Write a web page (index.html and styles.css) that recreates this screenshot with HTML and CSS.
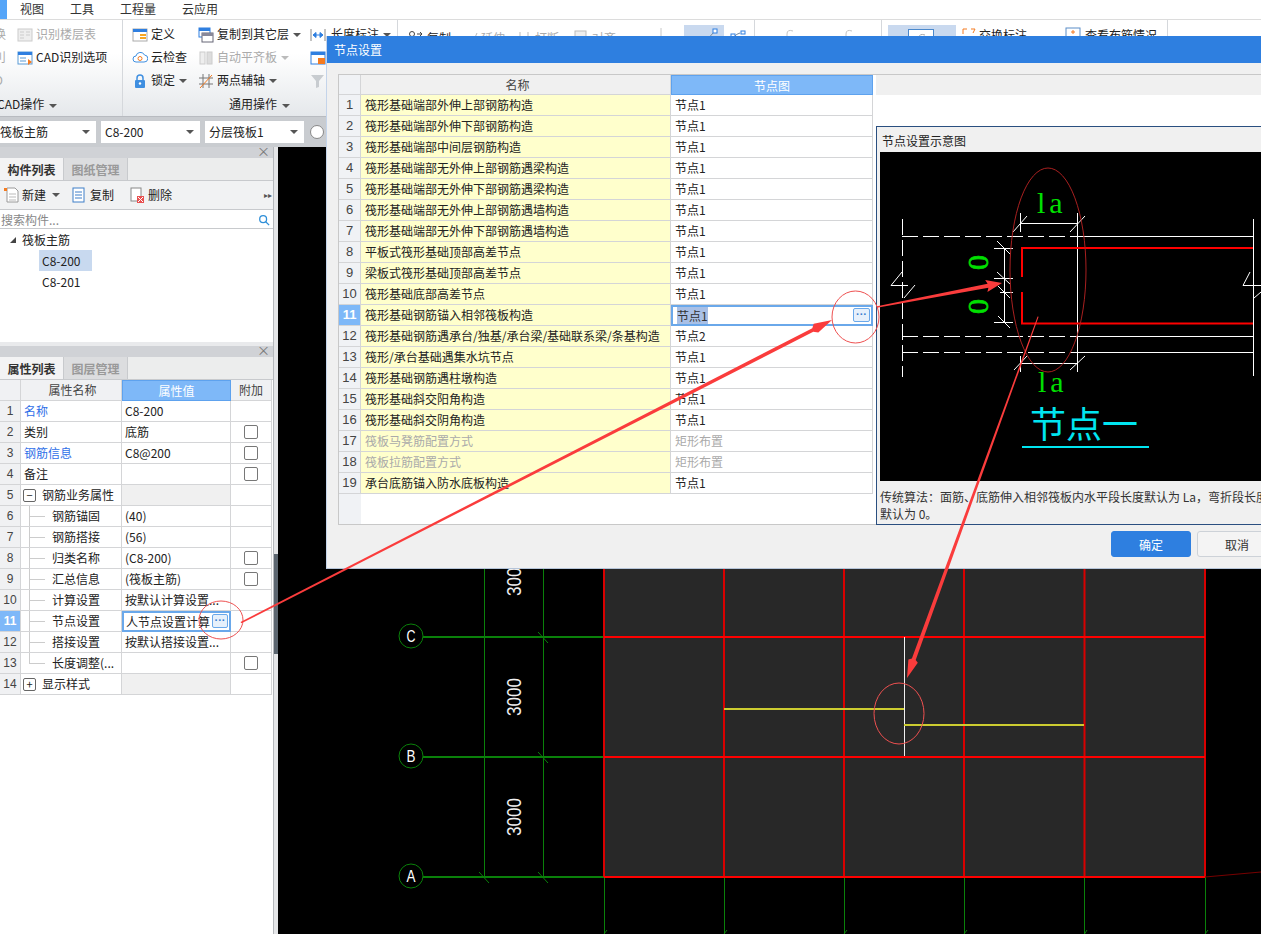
FILE: index.html
```html
<!DOCTYPE html>
<html lang="zh-CN">
<head>
<meta charset="utf-8">
<title>节点设置</title>
<link rel="stylesheet" href="styles.css">
</head>
<body>
<div class="app">
  <nav class="menubar">
    <span class="menu-active"></span>
    <span class="menu-item">视图</span>
    <span class="menu-item">工具</span>
    <span class="menu-item">工程量</span>
    <span class="menu-item">云应用</span>
  </nav>

  <div class="ribbon">
    <section class="rb-group g1">
      <div class="rb-rows">
        <div class="rb-item off"><span class="cut">换</span><svg class="ic" viewBox="0 0 16 16"><rect x="1" y="2" width="14" height="12" fill="#eee" stroke="#ccc"/><path d="M3 5h4M3 8h4M3 11h4M9 5h4M9 8h4" stroke="#ccc"/></svg><span>识别楼层表</span></div>
        <div class="rb-item"><span class="cut off">刂</span><svg class="ic" viewBox="0 0 16 16"><rect x="1" y="2" width="14" height="12" fill="#fff" stroke="#5b9bd5"/><rect x="1" y="2" width="14" height="3" fill="#2f7fe0"/><path d="M3 8h6M3 11h6" stroke="#5b9bd5"/><path d="M11 9l4 3-4 3z" fill="#f47b20"/></svg><span>CAD识别选项</span></div>
        <div class="rb-item off"><span class="cut">O</span></div>
      </div>
      <div class="rb-label lab1">CAD操作<i class="caret"></i></div>
    </section>
    <section class="rb-group g2">
      <div class="rb-cols">
        <div class="rb-rows c-a">
          <div class="rb-item"><svg class="ic" viewBox="0 0 16 16"><rect x="1" y="2" width="14" height="12" fill="#fff" stroke="#aaa"/><rect x="1" y="2" width="14" height="3" fill="#2f7fe0"/><path d="M8 8h6M8 11h6" stroke="#f5a623" stroke-width="2"/></svg><span>定义</span></div>
          <div class="rb-item"><svg class="ic" viewBox="0 0 16 16"><path d="M4 12a3 3 0 0 1 0-6 4.500 4.500 0 0 1 8.500-1A3.500 3.500 0 0 1 12 12z" fill="#fff" stroke="#3f8fe0"/><circle cx="8" cy="8.500" r="2" fill="none" stroke="#f47b20"/></svg><span>云检查</span></div>
          <div class="rb-item"><svg class="ic" viewBox="0 0 16 16"><path d="M5 7V5a3 3 0 0 1 6 0v2" fill="none" stroke="#3f8fe0" stroke-width="1.500"/><rect x="3" y="7" width="10" height="8" rx="1" fill="#3f8fe0"/><circle cx="8" cy="10.500" r="1.200" fill="#fff"/></svg><span>锁定</span><i class="caret"></i></div>
        </div>
        <div class="rb-rows c-b">
          <div class="rb-item"><svg class="ic" viewBox="0 0 16 16"><rect x="1" y="1" width="11" height="9" fill="#fff" stroke="#2f7fe0"/><rect x="1" y="1" width="11" height="3" fill="#2f7fe0"/><rect x="4" y="6" width="11" height="9" fill="#fff" stroke="#667"/><rect x="4" y="6" width="11" height="3" fill="#889"/></svg><span>复制到其它层</span><i class="caret"></i></div>
          <div class="rb-item off"><svg class="ic" viewBox="0 0 16 16"><rect x="2" y="2" width="5" height="12" fill="#eee" stroke="#ccc"/><rect x="9" y="2" width="5" height="12" fill="#ddd" stroke="#ccc"/></svg><span>自动平齐板</span><i class="caret lite"></i></div>
          <div class="rb-item"><svg class="ic" viewBox="0 0 16 16"><path d="M5 1v14M11 1v14M1 5h14M1 11h14" stroke="#777" fill="none"/><path d="M2 15L14 2" stroke="#f47b20"/></svg><span>两点辅轴</span><i class="caret"></i></div>
        </div>
        <div class="rb-rows c-c">
          <div class="rb-item"><svg class="ic" viewBox="0 0 16 16"><path d="M1 2v12M15 2v12" stroke="#888"/><path d="M3 8h10M3 8l3-2.500v5zM13 8l-3-2.500v5z" fill="#2f7fe0" stroke="#2f7fe0"/></svg><span>长度标注</span><i class="caret"></i></div>
          <div class="rb-item"><svg class="ic" viewBox="0 0 16 16"><rect x="1" y="2" width="14" height="12" fill="#fff" stroke="#2f7fe0"/><rect x="1" y="2" width="14" height="3" fill="#2f7fe0"/><rect x="8" y="8" width="7" height="6" fill="#f47b20"/></svg></div>
          <div class="rb-item"><svg class="ic" viewBox="0 0 16 16"><path d="M1 2h13L9 8v6l-3 1V8z" fill="#c8ccd0"/></svg></div>
        </div>
      </div>
      <div class="rb-label lab2">通用操作<i class="caret"></i></div>
    </section>
    <section class="rb-group g3">
      <span class="tool"><svg class="ic" viewBox="0 0 16 16"><circle cx="4" cy="4" r="2.500" fill="none" stroke="#444"/><circle cx="9" cy="13" r="3" fill="none" stroke="#2f7fe0"/><path d="M9 4h5M12 2l2 2-2 2" fill="none" stroke="#444"/></svg><span>复制</span></span>
      <span class="tool off"><svg class="ic" viewBox="0 0 16 16"><path d="M1 9h9" stroke="#bbb" stroke-dasharray="2 1"/><path d="M11 12L15 3" stroke="#bbb"/></svg><span>延伸</span></span>
      <span class="tool off"><svg class="ic" viewBox="0 0 16 16"><path d="M4 2v5M12 2v5" stroke="#bbb"/><rect x="1" y="9" width="6" height="4" fill="#ccc"/><rect x="9" y="9" width="6" height="4" fill="#ccc"/></svg><span>打断</span></span>
      <span class="tool off t-align"><svg class="ic" viewBox="0 0 16 16"><rect x="2" y="1" width="11" height="9" fill="#eee" stroke="#bbb"/><path d="M1 13h14" stroke="#bbb" stroke-width="2"/></svg><span>对齐</span><i class="caret lite"></i></span>
    </section>
    <section class="rb-group g4">
      <svg class="g4-bar" viewBox="0 0 2 12"><path d="M1 0v12" stroke="#c8c8c8"/></svg>
      <div class="sel-a">
        <svg class="ic" viewBox="0 0 16 16"><path d="M3 14L12 4" stroke="#789" fill="none"/><rect x="11" y="1" width="4" height="4" fill="#fff" stroke="#2f7fe0"/></svg>
      </div>
      <svg class="ic g4-next" viewBox="0 0 16 16"><path d="M2 13Q3 6 10 4" fill="none" stroke="#789"/><rect x="1" y="5" width="4" height="3" fill="#fff" stroke="#2f7fe0"/><rect x="11" y="2" width="4" height="3" fill="#fff" stroke="#2f7fe0"/></svg>
    </section>
    <section class="rb-group g5">
      <svg class="arc" viewBox="0 0 8 12"><path d="M7 2Q1 0 1 5V12" fill="none" stroke="#c4c4c4"/></svg>
      <svg class="arc" viewBox="0 0 8 12"><path d="M7 2Q1 0 1 5V12" fill="none" stroke="#c4c4c4"/></svg>
    </section>
    <section class="rb-group g6">
      <div class="sel-b"><div class="sel-b-box"><svg class="arc-in" viewBox="0 0 8 12"><path d="M7 2Q1 0 1 5V12" fill="none" stroke="#a8a8a8"/></svg></div></div>
      <svg class="ic g6-i" viewBox="0 0 16 16"><path d="M2 7V2h4M10 2h4l-2 4" fill="none" stroke="#f47b20"/><rect x="0" y="9" width="16" height="6" fill="#6aa4e8"/></svg><span class="rb-tx g6-t">交换标注</span>
      <svg class="ic g6-j" viewBox="0 0 16 16"><rect x="1" y="1" width="14" height="14" fill="#fff" stroke="#5b8dc8"/><path d="M8 3v4M6 5h4M4 11h3M9 11h3" stroke="#f47b20"/></svg><span class="rb-tx">查看布筋情况</span>
    </section>
  </div>

  <div class="selbar">
    <div class="combo">筏板主筋<i class="caret"></i></div>
    <div class="combo c2">C8-200<i class="caret"></i></div>
    <div class="combo c2">分层筏板1<i class="caret"></i></div>
    <span class="radio"></span>
  </div>

  <div class="main">
    <aside class="side">
      <section class="panel p1">
        <div class="p-head"><span class="p-close">×</span></div>
        <div class="tabs"><span class="tab on">构件列表</span><span class="tab">图纸管理</span></div>
        <div class="tools">
          <svg class="ic" viewBox="0 0 16 16"><path d="M4 1h8l3 3v11H4z" fill="#fff" stroke="#999"/><path d="M6 7h7M6 10h7M6 13h7" stroke="#bbb"/><path d="M1 1h3v3H1z" fill="#f47b20"/></svg><span>新建</span><i class="caret"></i>
          <svg class="ic t2" viewBox="0 0 16 16"><rect x="2" y="1" width="11" height="14" fill="#fff" stroke="#3f7fc8"/><path d="M4 5h7M4 8h7M4 11h7" stroke="#3f7fc8"/></svg><span>复制</span>
          <svg class="ic t3" viewBox="0 0 16 16"><rect x="2" y="1" width="10" height="13" fill="#fff" stroke="#888"/><rect x="8" y="9" width="7" height="7" fill="#e85050"/><path d="M9 10l5 5M14 10l-5 5" stroke="#fff"/></svg><span>删除</span>
          <span class="more">▸▸</span>
        </div>
        <div class="search"><span>搜索构件...</span><svg class="search-ic" viewBox="0 0 14 14"><circle cx="6" cy="6" r="4" fill="none" stroke="#2f8fd8" stroke-width="1.500"/><path d="M9 9l4 4" stroke="#2f8fd8" stroke-width="1.500"/></svg></div>
        <div class="tree">
          <div class="tree-root"><i class="tri"></i>筏板主筋</div>
          <div class="tree-leaf on">C8-200</div>
          <div class="tree-leaf">C8-201</div>
        </div>
      </section>
      <section class="panel p2">
        <div class="p-head"><span class="p-close">×</span></div>
        <div class="tabs"><span class="tab on">属性列表</span><span class="tab">图层管理</span></div>
        <div class="props">
          <div class="pr head"><span class="n"></span><span class="k">属性名称</span><span class="v">属性值</span><span class="a">附加</span></div>
          <div class="pr"><span class="n">1</span><span class="k link">名称</span><span class="v">C8-200</span><span class="a"></span></div>
          <div class="pr"><span class="n">2</span><span class="k">类别</span><span class="v">底筋</span><span class="a"><i class="chk"></i></span></div>
          <div class="pr"><span class="n">3</span><span class="k link">钢筋信息</span><span class="v">C8@200</span><span class="a"><i class="chk"></i></span></div>
          <div class="pr"><span class="n">4</span><span class="k">备注</span><span class="v"></span><span class="a"><i class="chk"></i></span></div>
          <div class="pr"><span class="n">5</span><span class="k grp"><i class="box">−</i>钢筋业务属性</span><span class="v shade"></span><span class="a"></span></div>
          <div class="pr"><span class="n">6</span><span class="k sub">钢筋锚固</span><span class="v">(40)</span><span class="a"></span></div>
          <div class="pr"><span class="n">7</span><span class="k sub">钢筋搭接</span><span class="v">(56)</span><span class="a"></span></div>
          <div class="pr"><span class="n">8</span><span class="k sub">归类名称</span><span class="v">(C8-200)</span><span class="a"><i class="chk"></i></span></div>
          <div class="pr"><span class="n">9</span><span class="k sub">汇总信息</span><span class="v">(筏板主筋)</span><span class="a"><i class="chk"></i></span></div>
          <div class="pr"><span class="n">10</span><span class="k sub">计算设置</span><span class="v">按默认计算设置...</span><span class="a"></span></div>
          <div class="pr"><span class="n act">11</span><span class="k sub">节点设置</span><span class="v edit">人节点设置计算<i class="dots">···</i></span><span class="a"></span></div>
          <div class="pr"><span class="n">12</span><span class="k sub">搭接设置</span><span class="v">按默认搭接设置...</span><span class="a"></span></div>
          <div class="pr"><span class="n">13</span><span class="k sub last">长度调整(...</span><span class="v"></span><span class="a"><i class="chk"></i></span></div>
          <div class="pr"><span class="n">14</span><span class="k grp"><i class="box">+</i>显示样式</span><span class="v shade"></span><span class="a"></span></div>
        </div>
      </section>
    </aside>
    <div class="split"><span class="thumb"></span></div>
    <div class="canvas">
      <svg class="cad" viewBox="278 147 983 787" width="983" height="787">
        <rect x="604" y="147" width="601" height="730" fill="#282828"/>
        <g class="g-green">
          <path d="M484.500 147V877M543.500 147V877"/>
          <path class="thick" d="M423 637H604M423 757H604M423 877H604"/>
          <path d="M604.500 877V934M724.500 877V934M844.500 877V934M964.500 877V934M1084.500 877V934M1205.500 877V934"/>
          <path d="M538 632L548 643M538 752L548 763M538 872L548 883M479 872L489 883"/>
          <path d="M604 934L607 930M724 934L727 930M844 934L847 930M964 934L967 930M1084.500 934L1087 930M1205 934L1208 930"/>
          <circle cx="411" cy="636" r="12"/><circle cx="411" cy="756" r="12"/><circle cx="411" cy="876" r="12"/>
        </g>
        <g class="bubble">
          <text x="411" y="642" textLength="9" lengthAdjust="spacingAndGlyphs">C</text>
          <text x="411" y="762" textLength="9" lengthAdjust="spacingAndGlyphs">B</text>
          <text x="411" y="882" textLength="9" lengthAdjust="spacingAndGlyphs">A</text>
        </g>
        <g class="dim">
          <text transform="translate(521 596) rotate(-90)" textLength="38" lengthAdjust="spacingAndGlyphs">3000</text>
          <text transform="translate(521 716) rotate(-90)" textLength="38" lengthAdjust="spacingAndGlyphs">3000</text>
          <text transform="translate(521 836) rotate(-90)" textLength="38" lengthAdjust="spacingAndGlyphs">3000</text>
        </g>
        <g class="g-red">
          <path class="vert" d="M604 147V877M724 147V877M844 147V877M964 147V877M1084.500 147V877M1205 147V877"/>
          <path d="M604 637H1205M604 757H1205M604 877H1205"/>
        </g>
        <path d="M904.500 637V756" stroke="#f0f0f0" stroke-width="1"/>
        <path d="M724 709H904M904 725H1084" stroke="#cccc30" stroke-width="2"/>
        <path d="M1205 877L1261 872" stroke="#700" stroke-width="1"/>
      </svg>
    </div>
  </div>

  <div class="dialog">
    <div class="dlg-title">节点设置</div>
    <div class="dlg-body">
      <div class="dlg-grid">
        <div class="nr head"><span class="n"></span><span class="k">名称</span><span class="v">节点图</span></div>
        <div class="nr"><span class="n">1</span><span class="k">筏形基础端部外伸上部钢筋构造</span><span class="v">节点1</span></div>
        <div class="nr"><span class="n">2</span><span class="k">筏形基础端部外伸下部钢筋构造</span><span class="v">节点1</span></div>
        <div class="nr"><span class="n">3</span><span class="k">筏形基础端部中间层钢筋构造</span><span class="v">节点1</span></div>
        <div class="nr"><span class="n">4</span><span class="k">筏形基础端部无外伸上部钢筋遇梁构造</span><span class="v">节点1</span></div>
        <div class="nr"><span class="n">5</span><span class="k">筏形基础端部无外伸下部钢筋遇梁构造</span><span class="v">节点1</span></div>
        <div class="nr"><span class="n">6</span><span class="k">筏形基础端部无外伸上部钢筋遇墙构造</span><span class="v">节点1</span></div>
        <div class="nr"><span class="n">7</span><span class="k">筏形基础端部无外伸下部钢筋遇墙构造</span><span class="v">节点1</span></div>
        <div class="nr"><span class="n">8</span><span class="k">平板式筏形基础顶部高差节点</span><span class="v">节点1</span></div>
        <div class="nr"><span class="n">9</span><span class="k">梁板式筏形基础顶部高差节点</span><span class="v">节点1</span></div>
        <div class="nr"><span class="n">10</span><span class="k">筏形基础底部高差节点</span><span class="v">节点1</span></div>
        <div class="nr"><span class="n act">11</span><span class="k">筏形基础钢筋锚入相邻筏板构造</span><span class="v edit"><mark class="hl">节点1</mark><i class="dots">···</i></span></div>
        <div class="nr"><span class="n">12</span><span class="k">筏形基础钢筋遇承台/独基/承台梁/基础联系梁/条基构造</span><span class="v">节点2</span></div>
        <div class="nr"><span class="n">13</span><span class="k">筏形/承台基础遇集水坑节点</span><span class="v">节点1</span></div>
        <div class="nr"><span class="n">14</span><span class="k">筏形基础钢筋遇柱墩构造</span><span class="v">节点1</span></div>
        <div class="nr"><span class="n">15</span><span class="k">筏形基础斜交阳角构造</span><span class="v">节点1</span></div>
        <div class="nr"><span class="n">16</span><span class="k">筏形基础斜交阴角构造</span><span class="v">节点1</span></div>
        <div class="nr dim-row"><span class="n">17</span><span class="k">筏板马凳筋配置方式</span><span class="v">矩形布置</span></div>
        <div class="nr dim-row"><span class="n">18</span><span class="k">筏板拉筋配置方式</span><span class="v">矩形布置</span></div>
        <div class="nr"><span class="n">19</span><span class="k">承台底筋锚入防水底板构造</span><span class="v">节点1</span></div>
        <div class="nr-fill"></div>
      </div>
      <div class="dlg-right">
        <div class="strip-gray"></div>
        <div class="strip-white"></div>
        <div class="node-panel">
          <div class="node-title">节点设置示意图</div>
          <svg class="node-pic" viewBox="880 152 381 329" width="381" height="329">
            <rect x="880" y="152" width="381" height="329" fill="#000"/>
            <g class="w-solid">
              <path d="M1077 236.500H1253M1077 336.500H1253M1077 352.500H1253M1077.500 213V372M1253.500 219V376"/>
              <path d="M1020 223.500H1077M1020.500 213V232M1077.500 213V232M1013 232L1027 216M1070 232L1085 216"/>
              <path d="M1020 363.500H1077M1020.500 356V372M1077.500 356V372M1014 370L1027 356M1070 370L1085 356"/>
              <path d="M994 248.500H1013M994 278.500H1013M1000 292.500H1013M994 322.500H1013M1004.500 248V322"/>
              <path d="M997 241L1010 254M997 272L1010 284M998 286L1010 298M998 316L1010 328"/>
              <path d="M902 272L891 285.500H908M915 285L904 298M1250 272L1243 285.500H1261M1261 292L1254 298"/>
            </g>
            <g class="w-dash">
              <path d="M902.500 219V377M902 236.500H1077M902 336.500H1077M902 352.500H1077"/>
            </g>
            <path class="red-bar" d="M1022 277V248H1253M1022 292V323.500H1253"/>
            <text class="la" x="1037" y="213">la</text>
            <text class="la" x="1038" y="392">la</text>
            <text class="zero" transform="translate(988 270) rotate(-90)">0</text>
            <text class="zero" transform="translate(988 314) rotate(-90)">0</text>
            <text class="node-cn" x="1030" y="438">节点一</text>
            <path d="M1022 447H1149" stroke="#00e5f0" stroke-width="2"/>
          </svg>
          <p class="node-desc">传统算法：面筋、底筋伸入相邻筏板内水平段长度默认为 La，弯折段长度</p>
          <p class="node-desc">默认为 0。</p>
        </div>
      </div>
    </div>
    <div class="dlg-foot">
      <button class="btn primary">确定</button>
      <button class="btn">取消</button>
    </div>
  </div>

  <svg class="marks" viewBox="0 0 1261 934" width="1261" height="934">
    <ellipse class="ring" cx="221" cy="620" rx="22" ry="19"/>
    <ellipse class="ring" cx="855.500" cy="317" rx="23.500" ry="26"/>
    <ellipse class="ring dark" cx="1048" cy="270" rx="38" ry="102"/>
    <ellipse class="ring" cx="899" cy="713.500" rx="25" ry="30.500"/>
    <path class="arrow" d="M240.500 622L812.300 328.200 813.700 323.700 832 320 818.300 332.600 813.300 331.800 241.500 623.300z"/>
    <path class="arrow" d="M877 306.300L987.600 283.700 985.200 280.100 1002 283 987.400 291.900 988.400 287.700 877 307.800z"/>
    <path class="arrow" d="M1037.600 316.500L911.900 658.500 908.400 659.400 907 678 917.800 662.800 915.700 659.900 1038.600 316.800z"/>
  </svg>
</div>
</body>
</html>
```

FILE: styles.css
```css
* { box-sizing: border-box; }
html, body { margin: 0; padding: 0; }
body { font: 12px/1.2 "Noto Sans CJK SC", "Noto Sans", sans-serif; color: #222; background: #fff; }
.app { position: relative; width: 1261px; height: 934px; overflow: hidden; display: flex; flex-direction: column; }
svg { display: block; }
i { font-style: normal; }

/* menu */
.menubar { height: 20px; display: flex; align-items: center; background: #fff; border-bottom: 1px solid #dcdcdc; flex: none; }
.menu-active { width: 7px; height: 19px; background: #55a5f8; margin-right: 13px; }
.menu-item { margin-right: 26px; color: #333; }

/* ribbon */
.ribbon { height: 97px; flex: none; display: flex; background: linear-gradient(#fff 35%, #e5e8eb); border-bottom: 1px solid #b8bbc0; }
.rb-group { position: relative; border-right: 1px solid #d5d8dc; flex: none; overflow: hidden; }
.ic { width: 16px; height: 16px; flex: none; }
.off { color: #aaa; }
.caret { display: inline-block; width: 0; height: 0; border: 4px solid transparent; border-top: 4px solid #555; border-bottom: 0; margin-left: 3px; vertical-align: middle; }
.caret.lite { border-top-color: #bbb; }
.rb-rows { display: flex; flex-direction: column; gap: 0; padding-top: 3px; }
.rb-item { height: 23px; display: flex; align-items: center; gap: 3px; white-space: nowrap; }
.rb-item .caret { margin-left: 1px; }
.rb-label { position: absolute; top: 77px; white-space: nowrap; }
.rb-label .caret { margin-left: 5px; }
.g1 { width: 123px; }
.g1 .cut { width: 20px; text-align: left; margin-left: -6px; flex: none; }
.g1 .rb-item .ic { margin-left: 0; }
.lab1 { left: -3px; }
.g2 { width: 275px; }
.rb-cols { display: flex; }
.c-a { width: 75px; padding-left: 9px; }
.c-b { width: 112px; }
.c-b .ic { margin-right: 0; }
.c-c .ic { margin-right: 2px; }
.lab2 { left: 106px; }
.g3 { width: 237px; display: flex; align-items: center; height: 30px; padding: 6px 0 0 10px; border-right: 0; }
.tool { display: flex; align-items: center; gap: 3px; margin-right: 11px; white-space: nowrap; }
.t-align { margin-left: 3px; }
.g4 { width: 120px; display: flex; padding: 5px 0 0 0; }
.g4-bar { width: 2px; height: 12px; margin: 3px 0 0 25px; flex: none; }
.sel-a { width: 40px; height: 30px; background: #c9d9ef; margin-left: 22px; display: flex; justify-content: flex-end; padding: 3px 6px 0 0; flex: none; }
.g4-next { margin: 4px 0 0 6px; }
.g5 { width: 127px; display: flex; gap: 51px; padding: 9px 0 0 31px; }
.arc { width: 8px; height: 12px; flex: none; }
.g6 { width: 286px; display: flex; align-items: flex-start; padding: 5px 0 0 6px; }
.sel-b { width: 68px; height: 30px; background: #c9d9ef; padding: 4px 0 0 20px; flex: none; }
.sel-b-box { width: 26px; height: 20px; background: #fff; border: 1px solid #4a88cc; padding: 3px 0 0 9px; }
.arc-in { width: 8px; height: 12px; }
.g6-i { margin: 2px 2px 0 5px; }
.g6-t { width: 86px; }
.g6-j { margin: 2px 4px 0 0; }
.g6 .rb-tx { padding-top: 3px; white-space: nowrap; }

/* selector bar */
.selbar { height: 30px; flex: none; display: flex; align-items: center; gap: 5px; background: #c9ccd0; }
.combo { width: 96px; height: 22px; background: #fff; display: flex; align-items: center; justify-content: space-between; padding: 0 6px 0 0; }
.combo.c2 { width: 99px; padding-left: 4px; }
.radio { width: 14px; height: 14px; border-radius: 50%; background: #fff; border: 1px solid #888; margin-left: 1px; }

/* main */
.main { flex: 1; display: flex; min-height: 0; }
.side { width: 274px; flex: none; display: flex; flex-direction: column; gap: 4px; background: #e9eaec; border-right: 1px solid #b5b8bc; }
.panel { background: #fff; display: flex; flex-direction: column; }
.p1 { height: 195px; }
.p2 { flex: 1; min-height: 0; }
.p-head { height: 11px; background: #d0d2d6; position: relative; flex: none; }
.p-close { position: absolute; right: 3px; top: -3px; color: #777; font-size: 13px; line-height: 14px; }
.tabs { height: 23px; display: flex; background: #eceded; border-bottom: 1px solid #c8cacd; flex: none; }
.tab { width: 64px; text-align: center; line-height: 24px; color: #999; background: #dcdddf; font-weight: 700; border-right: 1px solid #c8cacd; }
.tab.on { color: #333; background: #f3f3f4; }
.tools { height: 29px; display: flex; align-items: center; gap: 3px; padding-left: 3px; background: #f1f2f3; border-bottom: 1px solid #c8cacd; flex: none; }
.t2 { margin-left: 8px; }
.t3 { margin-left: 12px; }
.more { margin-left: auto; color: #555; font-size: 8px; margin-right: 1px; }
.search { height: 19px; display: flex; align-items: center; justify-content: space-between; color: #888; border-bottom: 1px solid #c8cacd; padding: 2px 3px 0 1px; flex: none; }
.search-ic { width: 12px; height: 12px; }
.tree { flex: 1; }
.tree-root { height: 21px; line-height: 21px; display: flex; align-items: center; padding-left: 10px; gap: 6px; }
.tri { width: 0; height: 0; border-style: solid; border-width: 0 0 6px 6px; border-color: transparent transparent #444 transparent; }
.tree-leaf { width: 53px; height: 21px; line-height: 21px; margin-left: 39px; padding-left: 3px; }
.tree-leaf.on { background: #c8d9ef; }

/* property grid */
.props { flex: 1; background: #fff; position: relative; }
.pr { display: grid; grid-template-columns: 21px 101px 109px 41px; width: 272px; height: 21px; }
.pr > span { border-right: 1px solid #d4d5d7; border-bottom: 1px solid #d4d5d7; line-height: 20px; white-space: nowrap; overflow: hidden; }
.pr .n { background: #f0f1f3; text-align: center; color: #444; font-family: "Liberation Sans", sans-serif; }
.pr .n.act { background: #7eb8f8; color: #fff; font-weight: 700; }
.pr .k { padding-left: 3px; position: relative; }
.pr .k.link { color: #2f6fe8; }
.pr .v { padding-left: 3px; }
.pr .shade { background: #f0f0f0; }
.pr .a { display: flex; align-items: center; justify-content: center; }
.pr.head > span { background: #f0f1f3; text-align: center; color: #444; }
.pr.head .v { background: #7eb8f8; color: #fff; border: 1px solid #5ea2ee; padding: 0; }
.chk { display: block; width: 14px; height: 14px; border: 1px solid #777; border-radius: 2px; background: #fff; }
.k.grp { display: flex; align-items: center; gap: 6px; padding-left: 2px; }
.box { display: block; width: 13px; height: 13px; border: 1px solid #666; border-radius: 2px; text-align: center; line-height: 10px; font-size: 11px; flex: none; }
.k.sub { padding-left: 31px; }
.k.sub::before { content: ""; position: absolute; left: 8px; top: -1px; bottom: -1px; border-left: 1px solid #ccc; }
.k.sub::after { content: ""; position: absolute; left: 8px; top: 10px; width: 16px; border-top: 1px solid #ccc; }
.k.sub.last::before { bottom: 10px; }
.pr .edit { border: 2px solid #6aa8ea; padding-left: 2px; line-height: 17px; position: relative; overflow: visible; }
.dots { position: absolute; right: 1px; top: 1px; width: 16px; height: 14px; border: 1px solid #6aa8ea; border-radius: 2px; background: #e6f0fb; color: #3a7fd0; font: 700 11px/11px "Liberation Sans", sans-serif; text-align: center; white-space: nowrap; overflow: hidden; }

.split { width: 4px; flex: none; background: #e4e5e7; position: relative; }
.thumb { position: absolute; left: 0; top: 407px; width: 4px; height: 100px; background: #5c6670; }
.canvas { flex: 1; background: #000; min-width: 0; }
.cad { overflow: hidden; }
.g-green { fill: none; stroke: #0a800a; stroke-width: 1; }
.g-green .thick { stroke-width: 2; }
.g-red { fill: none; stroke: #ff0000; stroke-width: 2; }
.g-red .vert { stroke: #d80000; }
.bubble text { fill: #fff; font: 17px "Liberation Sans", sans-serif; text-anchor: middle; }
.dim text { fill: #f0f0f0; font: 20px "Liberation Sans", sans-serif; }

/* dialog */
.dialog { position: absolute; left: 326px; top: 36px; width: 935px; height: 533px; background: #f0f0f0; overflow: hidden; display: flex; flex-direction: column; border-left: 1px solid #c4d4ea; border-bottom: 1px solid #b5c4d8; }
.dlg-title { height: 27px; flex: none; background: #2e7fe0; color: #fff; line-height: 27px; padding-left: 7px; }
.dlg-body { height: 462px; flex: none; display: flex; padding: 11px 0 0 11px; }
.dlg-grid { width: 538px; height: 451px; background: #fff; border: 1px solid #c8c8c8; border-right: 0; display: flex; flex-direction: column; flex: none; }
.nr { display: grid; grid-template-columns: 22px 310px 202px; height: 21px; flex: none; }
.nr.head { height: 20px; }
.nr > span { border-right: 1px solid #d4d5d7; border-bottom: 1px solid #d4d5d7; line-height: 20px; white-space: nowrap; overflow: hidden; }
.nr .n { background: #f0f2f5; text-align: center; color: #444; font-family: "Liberation Sans", sans-serif; font-size: 13px; }
.nr .n.act { background: #7eb8f8; color: #fff; font-weight: 700; }
.nr .k { background: #ffffcc; padding-left: 4px; }
.nr .v { padding-left: 4px; }
.nr.head .k { background: #f0f0f0; text-align: center; color: #444; }
.nr.head .v { background: #7eb8f8; color: #fff; text-align: center; border: 1px solid #5ea2ee; padding: 0; }
.nr.dim-row .k, .nr.dim-row .v { color: #aaa; }
.nr .edit { border: 2px solid #6aa8ea; padding-left: 4px; line-height: 17px; position: relative; overflow: visible; }
.hl { background: #a9c0e6; color: #333; }
.nr .dots { width: 17px; }
.nr-fill { flex: 1; width: 22px; background: #f0f2f5; }
.dlg-right { flex: 1; min-width: 0; display: flex; flex-direction: column; }
.strip-gray { height: 21px; border-top: 1px solid #c8c8c8; flex: none; }
.strip-white { height: 31px; background: #fff; flex: none; }
.node-panel { flex: 1; border: 1px solid #2a4f80; border-right: 0; padding-left: 3px; overflow: hidden; }
.node-title { height: 25px; line-height: 27px; padding-left: 2px; }
.node-desc { margin: 0; line-height: 17px; white-space: nowrap; color: #333; }
.node-pic { margin-bottom: 7px; }
.w-solid { fill: none; stroke: #fff; stroke-width: 1; }
.w-dash { fill: none; stroke: #fff; stroke-width: 1; stroke-dasharray: 16 5; }
.red-bar { fill: none; stroke: #ff0000; stroke-width: 2; }
.la { fill: #00e000; font: 30px "Liberation Serif", serif; letter-spacing: 4px; }
.zero { fill: #00e000; stroke: #00e000; stroke-width: .6; font: 30px "Liberation Serif", serif; }
.node-cn { fill: #00e5f0; font: 36px "Noto Sans CJK SC", serif; }
.dlg-foot { flex: 1; display: flex; gap: 6px; padding: 6px 0 0 784px; }
.btn { flex: none; width: 80px; height: 26px; border: 1px solid #cdd2d8; border-radius: 3px; background: #f4f4f4; font: 12px "Noto Sans CJK SC", sans-serif; color: #333; padding: 0; }
.btn.primary { background: #2e7fe0; border-color: #2e7fe0; color: #fff; }

/* hand-drawn annotations */
.marks { position: absolute; left: 0; top: 0; pointer-events: none; }
.ring { fill: none; stroke: #ee5050; stroke-width: 1; }
.ring.dark { stroke: #a82020; }
.arrow { fill: #fa3c3c; }
```
